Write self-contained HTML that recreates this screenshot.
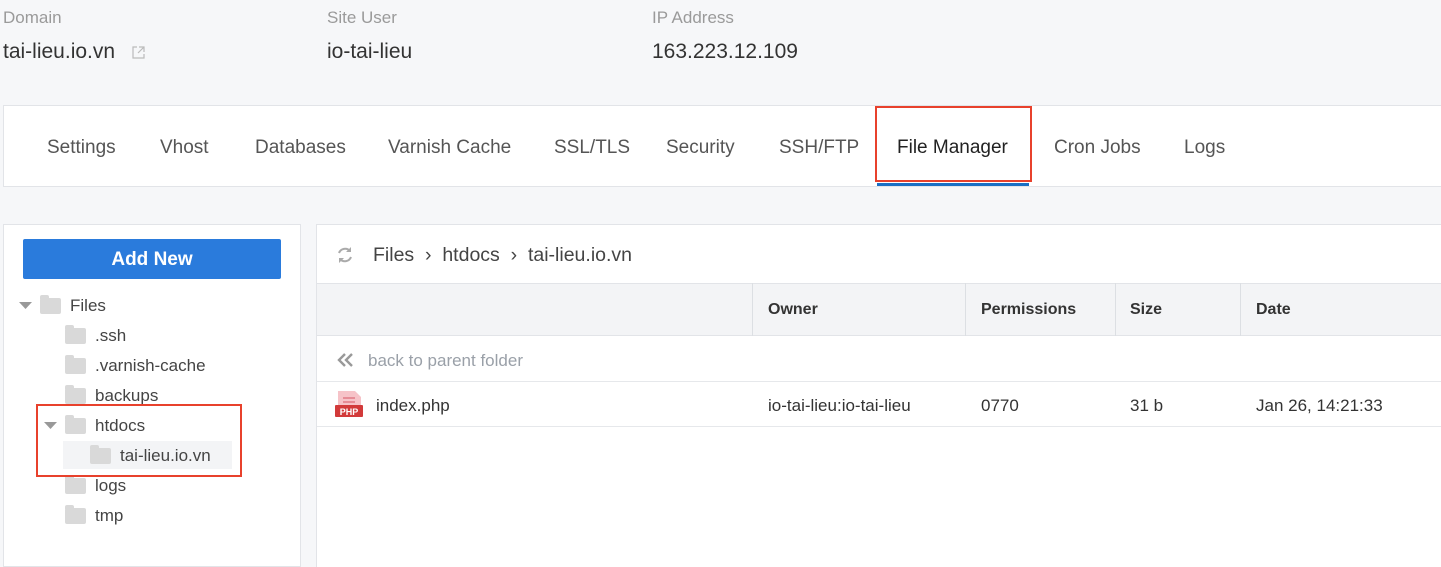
<!DOCTYPE html>
<html><head><meta charset="utf-8"><style>
*{margin:0;padding:0;box-sizing:border-box}
body{width:1441px;height:567px;overflow:hidden;background:#f6f7f9;font-family:"Liberation Sans",sans-serif;position:relative;color:#333}
.a{position:absolute;white-space:nowrap}
.lbl{font-size:17px;color:#9a9a9a;top:8px}
.val{font-size:21px;color:#333;top:40px}
.tab{font-size:19px;color:#555;top:137px}
.tree{font-size:17px;color:#444}
.fold{position:absolute;width:21px;height:16px;background:#d9d9d9;border-radius:2px}
.fold:before{content:"";position:absolute;left:0;top:-3px;width:9px;height:4px;background:#d9d9d9;border-radius:2px 2px 0 0}
.hd{font-size:16px;font-weight:bold;color:#333;top:301px}
.cell{font-size:17px;color:#333;top:396px}
.vl{position:absolute;top:283px;height:53px;width:1px;background:#dcdfe3}
</style></head><body>
<div class="a lbl" style="left:3px">Domain</div>
<div class="a lbl" style="left:327px">Site User</div>
<div class="a lbl" style="left:652px">IP Address</div>
<div class="a val" style="left:3px">tai-lieu.io.vn</div>
<svg class="a" style="left:131px;top:45px" width="15" height="15" viewBox="0 0 15 15"><path d="M6 2H2v11h11V9M8 2h5v5M13 2L7 8" fill="none" stroke="#bbb" stroke-width="1.2"/></svg>
<div class="a val" style="left:327px">io-tai-lieu</div>
<div class="a val" style="left:652px">163.223.12.109</div>

<div class="a" style="left:3px;top:105px;width:1440px;height:82px;background:#fff;border:1px solid #e2e4e8;border-right:none"></div>
<div class="a tab" style="left:47px">Settings</div>
<div class="a tab" style="left:160px">Vhost</div>
<div class="a tab" style="left:255px">Databases</div>
<div class="a tab" style="left:388px">Varnish Cache</div>
<div class="a tab" style="left:554px">SSL/TLS</div>
<div class="a tab" style="left:666px">Security</div>
<div class="a tab" style="left:779px">SSH/FTP</div>
<div class="a tab" style="left:897px;color:#222">File Manager</div>
<div class="a tab" style="left:1054px">Cron Jobs</div>
<div class="a tab" style="left:1184px">Logs</div>
<div class="a" style="left:875px;top:106px;width:157px;height:76px;border:2px solid #e8412c"></div>
<div class="a" style="left:877px;top:183px;width:152px;height:3px;background:#1a6fc4"></div>

<div class="a" style="left:3px;top:224px;width:298px;height:343px;background:#fff;border:1px solid #e2e4e8"></div>
<div class="a" style="left:316px;top:224px;width:1125px;height:343px;background:#fff;border-top:1px solid #e2e4e8;border-left:1px solid #e2e4e8"></div>

<div class="a" style="left:23px;top:239px;width:258px;height:40px;background:#2a7bdc;border-radius:2px;color:#fff;font-weight:bold;font-size:19px;text-align:center;line-height:41px">Add New</div>
<svg class="a" style="left:19px;top:302px" width="13" height="8"><path d="M0 0h13L6.5 7z" fill="#999"/></svg>
<div class="fold" style="left:40px;top:298px"></div><div class="a tree" style="left:70px;top:296px">Files</div>
<div class="fold" style="left:65px;top:328px"></div><div class="a tree" style="left:95px;top:326px">.ssh</div>
<div class="fold" style="left:65px;top:358px"></div><div class="a tree" style="left:95px;top:356px">.varnish-cache</div>
<div class="fold" style="left:65px;top:388px"></div><div class="a tree" style="left:95px;top:386px">backups</div>
<svg class="a" style="left:44px;top:422px" width="13" height="8"><path d="M0 0h13L6.5 7z" fill="#999"/></svg>
<div class="fold" style="left:65px;top:418px"></div><div class="a tree" style="left:95px;top:416px">htdocs</div>
<div class="a" style="left:63px;top:441px;width:169px;height:28px;background:#f3f4f6"></div>
<div class="fold" style="left:90px;top:448px"></div><div class="a tree" style="left:120px;top:446px">tai-lieu.io.vn</div>
<div class="fold" style="left:65px;top:478px"></div><div class="a tree" style="left:95px;top:476px">logs</div>
<div class="fold" style="left:65px;top:508px"></div><div class="a tree" style="left:95px;top:506px">tmp</div>
<div class="a" style="left:36px;top:404px;width:206px;height:73px;border:2px solid #e8412c"></div>

<svg class="a" style="left:335px;top:245px" width="20" height="20" viewBox="0 0 20 20"><path d="M15 6A6.5 6.5 0 0 0 4 8M5 14a6.5 6.5 0 0 0 11-2" fill="none" stroke="#aaa" stroke-width="2"/><path d="M16 2v5h-5zM4 18v-5h5z" fill="#aaa"/></svg>
<div class="a" style="left:373px;top:244px;font-size:19.5px;color:#444">Files &nbsp;›&nbsp; htdocs &nbsp;›&nbsp; tai-lieu.io.vn</div>
<div class="a" style="left:317px;top:283px;width:1124px;height:53px;background:#f3f4f6;border-top:1px solid #e2e4e8;border-bottom:1px solid #e2e4e8"></div>
<div class="vl" style="left:752px"></div><div class="vl" style="left:965px"></div><div class="vl" style="left:1115px"></div><div class="vl" style="left:1240px"></div>
<div class="a hd" style="left:768px">Owner</div>
<div class="a hd" style="left:981px">Permissions</div>
<div class="a hd" style="left:1130px">Size</div>
<div class="a hd" style="left:1256px">Date</div>
<svg class="a" style="left:337px;top:352px" width="18" height="16"><path d="M8 2L2 8l6 6M15 2L9 8l6 6" fill="none" stroke="#999" stroke-width="2.4"/></svg>
<div class="a" style="left:368px;top:351px;font-size:17px;color:#9aa0a8">back to parent folder</div>
<div class="a" style="left:317px;top:381px;width:1124px;height:1px;background:#e6e8eb"></div>
<div class="a" style="left:317px;top:426px;width:1124px;height:1px;background:#e6e8eb"></div>
<svg class="a" style="left:335px;top:390px" width="28" height="28" viewBox="0 0 28 28"><path d="M3 1h17l6 6v13H3z" fill="#f6c3c8"/><path d="M8 8h12M8 12h12" stroke="#e07a85" stroke-width="1.5"/><rect x="0" y="15" width="28" height="12" rx="1" fill="#d23a3a"/><text x="14" y="25" font-size="9" font-weight="bold" fill="#fff" text-anchor="middle" font-family="Liberation Sans">PHP</text></svg>
<div class="a cell" style="left:376px">index.php</div>
<div class="a cell" style="left:768px">io-tai-lieu:io-tai-lieu</div>
<div class="a cell" style="left:981px">0770</div>
<div class="a cell" style="left:1130px">31 b</div>
<div class="a cell" style="left:1256px">Jan 26, 14:21:33</div>
</body></html>
